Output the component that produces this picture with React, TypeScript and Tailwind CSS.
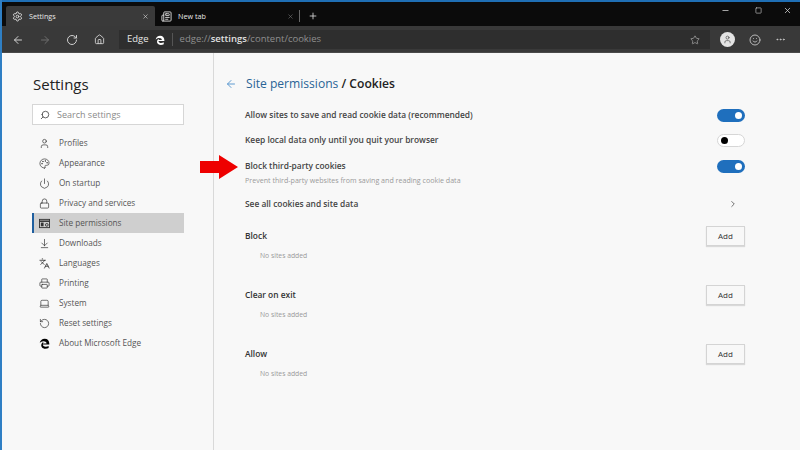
import { ArrowLeft, ArrowRight, RotateCw, Home, Star, Smile, MoreHorizontal, Minus, Square, X, Plus, Settings, Search, User, Palette, Power, Lock, ArrowDownToLine, Languages, Printer, Laptop, RotateCcw, ChevronRight, Newspaper } from 'lucide-react';
import type { ReactNode } from 'react';

function EdgeLogo({ className }: { className: string }) {
  return (
    <svg viewBox="0 0 16 16" className={className} fill="currentColor">
      <path d="M1 7.5C1.6 3.4 4.6 1 8.3 1c4 0 6.7 2.8 6.7 7.2v1.3H5.6c.2 2.2 2 3.3 4.2 3.3 1.6 0 3-.4 4.2-1.1v2.9c-1.3.8-3 1.2-4.8 1.2-2.2 0-4-.8-5-2.2-.9-1.2-1.2-2.8-.7-4.4.5-1.7 1.7-3 3.5-3.7-.7.7-1.1 1.5-1.3 2.4h5.2c0-1.6-1-2.7-2.8-2.7C5.6 4.2 3 5.300 1 7.500z" />
    </svg>
  );
}

function SitePermIcon() {
  return (
    <svg viewBox="0 0 12 12" className="w-[11px] h-[11px]" fill="none" stroke="currentColor" strokeWidth="1">
      <rect x="0.5" y="1.5" width="11" height="9" />
      <path d="M0.5 3.5h11" strokeWidth="1.6" />
      <rect x="2" y="5" width="3" height="4" fill="currentColor" stroke="none" />
      <circle cx="8.500" cy="7.500" r="1.500" />
    </svg>
  );
}

const menu: { icon: ReactNode; label: string; active?: boolean }[] = [
  { icon: <User className="w-[11px] h-[11px]" strokeWidth={1.5} />, label: 'Profiles' },
  { icon: <Palette className="w-[11px] h-[11px]" strokeWidth={1.5} />, label: 'Appearance' },
  { icon: <Power className="w-[11px] h-[11px]" strokeWidth={1.5} />, label: 'On startup' },
  { icon: <Lock className="w-[11px] h-[11px]" strokeWidth={1.5} />, label: 'Privacy and services' },
  { icon: <SitePermIcon />, label: 'Site permissions', active: true },
  { icon: <ArrowDownToLine className="w-[11px] h-[11px]" strokeWidth={1.5} />, label: 'Downloads' },
  { icon: <Languages className="w-[11px] h-[11px]" strokeWidth={1.8} />, label: 'Languages' },
  { icon: <Printer className="w-[11px] h-[11px]" strokeWidth={1.5} />, label: 'Printing' },
  { icon: <Laptop className="w-[11px] h-[11px]" strokeWidth={1.5} />, label: 'System' },
  { icon: <RotateCcw className="w-[11px] h-[11px]" strokeWidth={1.5} />, label: 'Reset settings' },
  { icon: <EdgeLogo className="w-[11px] h-[11px] text-black" />, label: 'About Microsoft Edge' },
];

function Toggle({ on }: { on: boolean }) {
  if (on) {
    return (
      <div className="w-[28px] h-[13px] rounded-full bg-[#1f6fbd] flex items-center justify-end pr-[3px]">
        <div className="w-[7px] h-[7px] rounded-full bg-white" />
      </div>
    );
  }
  return (
    <div className="w-[28px] h-[13px] rounded-full bg-white border border-[#d6d6d6] flex items-center pl-[3px]">
      <div className="w-[7px] h-[7px] rounded-full bg-black" />
    </div>
  );
}

function SiteList({ title }: { title: string }) {
  return (
    <div className="flex flex-col h-[59px]">
      <div className="flex items-center justify-between h-[20px]">
        <span className="text-[8.4px] font-semibold text-[#333]">{title}</span>
        <button className="w-[39px] h-[20px] bg-[#f8f8f8] border border-[#d4d4d4] shadow-[0_1px_1px_rgba(0,0,0,0.12)] text-[8px] text-[#333]">Add</button>
      </div>
      <div className="pl-[15px] mt-[3px] text-[6.8px] leading-[14px] text-[#9a9a9a]">No sites added</div>
    </div>
  );
}

export default function App() {
  return (
    <div className="relative w-[800px] h-[450px] overflow-hidden flex flex-col bg-[#f8f8f8] border-l-2 border-[#2f7fc4] font-['Open_Sans','Noto_Sans',sans-serif]">
      {/* title bar with tabs */}
      <div className="h-[2px] bg-[#1f6fb5] shrink-0" />
      <div className="h-[24px] shrink-0 bg-[#0b0b0b] flex items-end pl-[4px] text-[7.2px] text-[#e8e8e8]">
        <div className="w-[149px] h-[20px] bg-[#3a3a3a] rounded-t-[2px] flex items-center pl-[6px] pr-[4px]">
          <Settings className="w-[11px] h-[11px] mr-[6px] text-[#ddd]" />
          <span>Settings</span>
          <X className="w-[7px] h-[7px] ml-auto mr-[2px] text-[#ddd]" />
        </div>
        <div className="w-[148px] h-[20px] flex items-center pl-[6px] pr-[3px]">
          <Newspaper className="w-[11px] h-[11px] mr-[6px] text-[#ddd]" />
          <span>New tab</span>
          <X className="w-[7px] h-[7px] ml-auto mr-[5px] text-[#777]" />
          <div className="w-px h-[12px] bg-[#666]" />
        </div>
        <div className="h-[20px] flex items-center ml-[5px]">
          <Plus className="w-[10px] h-[10px] text-[#ddd]" />
        </div>
        <div className="ml-auto flex items-center self-start mt-[4px] text-[#d8d8d8]">
          <Minus className="w-[9px] h-[9px]" />
          <Square className="w-[7px] h-[7px] ml-[25px]" />
          <X className="w-[9px] h-[9px] ml-[21px] mr-[8px]" />
        </div>
      </div>

      {/* toolbar */}
      <div className="h-[27px] shrink-0 bg-[#393939] flex items-center pt-[1px] border-b border-[#4a4a4a]">
        <ArrowLeft className="ml-[10px] w-[12px] h-[12px] text-[#d0d0d0]" />
        <ArrowRight className="ml-[15px] w-[12px] h-[12px] text-[#6e6e6e]" />
        <RotateCw className="ml-[15px] w-[12px] h-[12px] text-[#d0d0d0]" />
        <Home className="ml-[16px] w-[11px] h-[11px] text-[#d0d0d0]" />
        <div className="ml-[14px] w-[591px] h-[19px] bg-[#2e2e2e] flex items-center pl-[8px] pr-[10px]">
          <span className="text-[9.5px] text-[#e6e6e6]">Edge</span>
          <EdgeLogo className="ml-[6px] w-[10px] h-[10px] text-white" />
          <div className="ml-[7px] w-px h-[13px] bg-[#555]" />
          <span className="ml-[7px] text-[9.5px] text-[#8f8f8f]">
            edge://<span className="text-[#e0e0e0] font-semibold">settings</span>/content/cookies
          </span>
          <Star className="ml-auto w-[10px] h-[10px] text-[#9a9a9a]" />
        </div>
        <div className="ml-[10px] w-[15px] h-[15px] rounded-full bg-[#e4e4e4] flex items-center justify-center">
          <User className="w-[9px] h-[9px] text-[#555]" />
        </div>
        <Smile className="ml-[14px] w-[12px] h-[12px] text-[#b8b8b8]" />
        <MoreHorizontal className="ml-[14px] w-[11px] h-[11px] text-[#c8c8c8]" />
      </div>

      <div className="flex-1 flex min-h-0">
        {/* sidebar */}
        <aside className="w-[212px] shrink-0 border-r border-[#d9d9d9] pl-[30px] pr-[29px] pt-[21px]">
          <h1 className="ml-[1px] text-[15px] leading-[20px] text-[#222] font-normal">Settings</h1>
          <div className="mt-[10px] h-[21px] bg-white border border-[#d6d6d6] flex items-center pl-[7px]">
            <Search className="w-[10px] h-[10px] text-[#444] -scale-x-100" />
            <span className="ml-[7px] text-[9px] text-[#8a8a8a]">Search settings</span>
          </div>
          <nav className="mt-[8px] flex flex-col">
            {menu.map((m) => (
              <div key={m.label} className={`relative h-[20px] flex items-center pl-[7px] text-[8.2px] text-[#555] ${m.active ? 'bg-[#cfcfcf]' : ''}`}>
                {m.active && <div className="absolute left-0 top-0 bottom-0 w-[2px] bg-[#1f5f9f]" />}
                <span className="w-[11px] flex justify-center text-[#333]">{m.icon}</span>
                <span className="ml-[9px]">{m.label}</span>
              </div>
            ))}
          </nav>
        </aside>

        {/* main */}
        <main className="flex-1 pl-[11px] pr-[55px] pt-[21px]">
          <div className="flex items-center h-[20px]">
            <ArrowLeft className="w-[12px] h-[12px] text-[#5f9bd1]" />
            <h2 className="ml-[9px] text-[12.1px] font-normal text-[#2a6496]">
              Site permissions <span className="text-[#222] font-semibold">/ Cookies</span>
            </h2>
          </div>
          <div className="pl-[20px]">
            <div className="mt-[8px] h-[26px] flex items-center justify-between text-[8.4px] font-semibold text-[#444]">
              <span>Allow sites to save and read cookie data (recommended)</span>
              <Toggle on />
            </div>
            <div className="h-[25px] flex items-center justify-between text-[8.4px] font-semibold text-[#444]">
              <span>Keep local data only until you quit your browser</span>
              <Toggle on={false} />
            </div>
            <div className="h-[26px] flex items-center justify-between text-[8.4px] font-semibold text-[#444]">
              <span>Block third-party cookies</span>
              <Toggle on />
            </div>
            <div className="-mt-[5px] text-[7.100px] leading-[12px] text-[#9a9a9a]">Prevent third-party websites from saving and reading cookie data</div>
            <div className="mt-[5px] h-[26px] flex items-center justify-between text-[8.4px] font-semibold text-[#444]">
              <span>See all cookies and site data</span>
              <ChevronRight className="w-[10px] h-[10px] mr-[7px] text-[#555]" />
            </div>
            <div className="mt-[9px] flex flex-col">
              <SiteList title="Block" />
              <SiteList title="Clear on exit" />
              <SiteList title="Allow" />
            </div>
          </div>
        </main>
      </div>

      {/* red annotation arrow */}
      <svg viewBox="0 0 38 24" className="absolute left-[198px] top-[155px] w-[38px] h-[24px]" fill="#ee0000">
        <path d="M0 6h19V0l19 12-19 12v-6H0z" />
      </svg>
    </div>
  );
}
